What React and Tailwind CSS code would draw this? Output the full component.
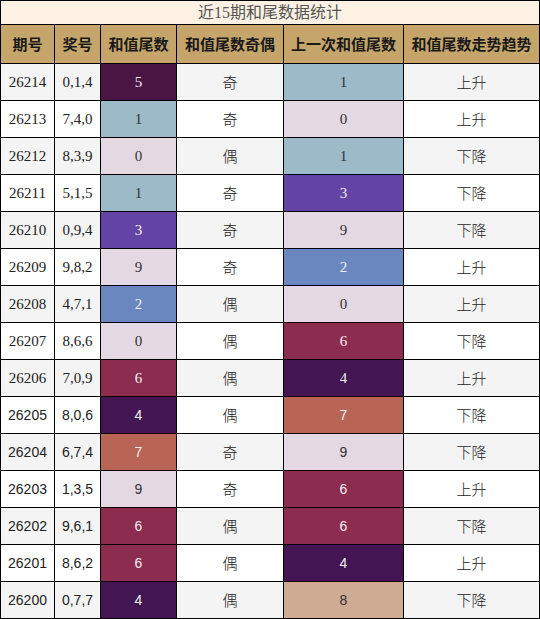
const rows = [
  ['26214', '0,1,4', 5, '奇', 1, '上升'],
  ['26213', '7,4,0', 1, '奇', 0, '上升'],
  ['26212', '8,3,9', 0, '偶', 1, '下降'],
  ['26211', '5,1,5', 1, '奇', 3, '下降'],
  ['26210', '0,9,4', 3, '奇', 9, '下降'],
  ['26209', '9,8,2', 9, '奇', 2, '上升'],
  ['26208', '4,7,1', 2, '偶', 0, '上升'],
  ['26207', '8,6,6', 0, '偶', 6, '下降'],
  ['26206', '7,0,9', 6, '偶', 4, '上升'],
  ['26205', '8,0,6', 4, '偶', 7, '下降'],
  ['26204', '6,7,4', 7, '奇', 9, '下降'],
  ['26203', '1,3,5', 9, '奇', 6, '上升'],
  ['26202', '9,6,1', 6, '偶', 6, '下降'],
  ['26201', '8,6,2', 6, '偶', 4, '上升'],
  ['26200', '0,7,7', 4, '偶', 8, '下降'],
];

// colour for each tail digit
const tailColors = {
  0: 'bg-[#e4d8e2] text-[#333]',
  1: 'bg-[#9dbac8] text-[#333]',
  2: 'bg-[#6a87c0] text-[#f0f0f0]',
  3: 'bg-[#6344a4] text-[#f0f0f0]',
  4: 'bg-[#431552] text-[#f0f0f0]',
  5: 'bg-[#4a1542] text-[#f0f0f0]',
  6: 'bg-[#8c2c4e] text-[#f0f0f0]',
  7: 'bg-[#b96556] text-[#f0f0f0]',
  8: 'bg-[#cfab93] text-[#333]',
  9: 'bg-[#e4d8e2] text-[#333]',
};

const grid = 'grid grid-cols-[54px_46px_76px_107px_120px_135px]';
const cell = 'flex items-center justify-center border-r border-black';
const cjk = "font-['Noto_Sans_CJK_SC',sans-serif]";

export default function App() {
  return (
    <div className="w-[540px] border border-black bg-white text-[#222]">
      {/* Title */}
      <div className="h-[24px] border-b border-black bg-[#fdf1e3] flex items-center justify-center text-[16px] text-[#555] font-['Liberation_Serif','Noto_Sans_CJK_SC',serif]">
        近15期和尾数据统计
      </div>

      {/* Header */}
      <div className={`${grid} h-[39px] border-b border-black bg-[#c5a56a] text-[15px] font-bold text-[#1a1a1a] ${cjk}`}>
        <div className={cell}>期号</div>
        <div className={cell}>奖号</div>
        <div className={cell}>和值尾数</div>
        <div className={cell}>和值尾数奇偶</div>
        <div className={cell}>上一次和值尾数</div>
        <div className="flex items-center justify-center">和值尾数走势趋势</div>
      </div>

      {/* Rows */}
      {rows.map((r, i) => {
        const bg = i % 2 === 0 ? 'bg-[#f4f4f4]' : 'bg-white';
        const num = i < 9
          ? "font-['Liberation_Serif',serif] text-[15px]"
          : "font-['Liberation_Sans',sans-serif] text-[14px]";
        const last = i === rows.length - 1;
        return (
          <div key={r[0]} className={`${grid} ${last ? 'h-[36px]' : 'h-[37px] border-b border-black'} ${bg}`}>
            <div className={`${cell} ${num}`}>{r[0]}</div>
            <div className={`${cell} ${num}`}>{r[1]}</div>
            <div className={`${cell} ${num} ${tailColors[r[2]]}`}>{r[2]}</div>
            <div className={`${cell} ${cjk} text-[15px] font-light text-[#222]`}>{r[3]}</div>
            <div className={`${cell} ${num} ${tailColors[r[4]]}`}>{r[4]}</div>
            <div className={`flex items-center justify-center ${cjk} text-[15px] font-light text-[#222]`}>{r[5]}</div>
          </div>
        );
      })}
    </div>
  );
}
